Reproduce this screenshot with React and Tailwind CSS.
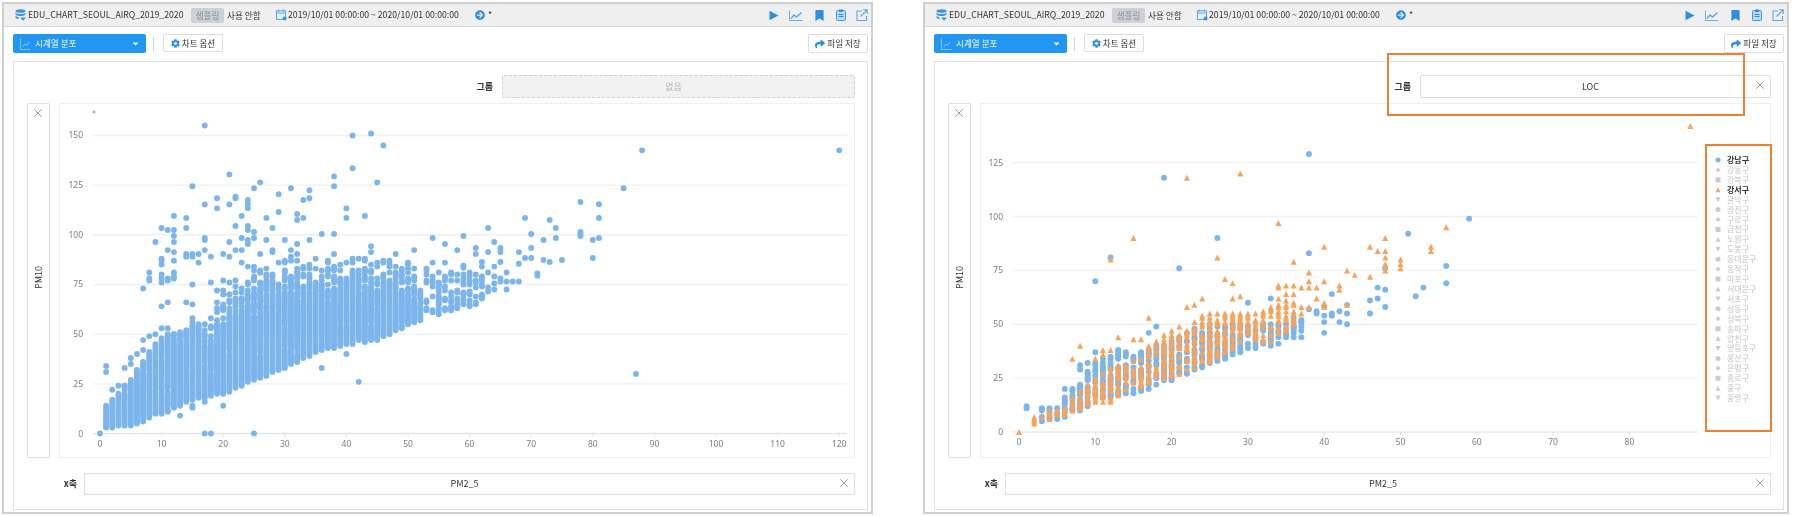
import { X } from "lucide-react";
import { FaCog, FaShare, FaArrowCircleRight, FaCaretDown, FaBookmark } from "react-icons/fa";

const BLUE = "#7cb5ec";
const ORANGE = "#f7a35c";
const GREY = "#cccccc";

const DISTRICTS = [
  "강남구", "강동구", "강북구", "강서구", "관악구", "광진구", "구로구", "금천구", "노원구",
  "도봉구", "동대문구", "동작구", "마포구", "서대문구", "서초구", "성동구", "성북구", "송파구",
  "양천구", "영등포구", "용산구", "은평구", "종로구", "중구", "중랑구",
];
const LEGEND_SHAPES = ["circle", "diamond", "square", "triangle", "down"];

// fixed seed so the scatter is the same on every render
function makeRandom(seed) {
  let s = seed;
  return () => {
    s = (s * 1664525 + 1013904223) % 4294967296;
    return s / 4294967296;
  };
}

function interp(table, x) {
  if (x <= table[0][0]) return table[0][1];
  for (let i = 1; i < table.length; i++) {
    const [x1, y1] = table[i];
    const [x0, y0] = table[i - 1];
    if (x <= x1) return y0 + ((y1 - y0) * (x - x0)) / (x1 - x0);
  }
  return table[table.length - 1][1];
}

function band(rand, from, to, lo, hi, density) {
  const pts = [];
  for (let x = from; x <= to; x++) {
    const a = Math.round(interp(lo, x));
    const b = Math.round(interp(hi, x));
    for (let y = a; y <= b; y++) {
      if (rand() < density(x, y, a, b)) pts.push([x, y]);
    }
  }
  return pts;
}

const LEFT_OUTLIERS = [
  [17,155],[41,150],[44,151],[46,145],[41,133.5],[21,130.4],[38,129.4],[26,126.4],[45,126.4],[15,124.4],[25,123.4],[31,123.4],[38,124.4],
  [34,122.4],[29,120.4],[19,118.4],[22,119.2],[22,118.4],[34,118.4],[24,117.5],[24,115.5],[24,113.4],[33,117.5],[17,115.3],[21,115.3],
  [19,113.3],[40,113.3],[29,111.5],[32,110.5],[12,109.5],[23,109.5],[43,109.5],[14,108.5],[27,108.5],[33,108.5],[40,108.5],[32,107.5],
  [10,103.4],[14,103.4],[22,104.4],[24,104.4],[28,103.4],[11,102.4],[12,102.4],[24,102.4],[25,101.4],[36,100.4],[38,100.4],[12,99.4],
  [17,98.4],[17,97.4],[23,98.4],[25,98.4],[27,97.4],[30,97.4],[34,97.4],[24,97.4],[54,98.4],[9,96.4],[12,96.4],[21,96.4],[24,95.4],
  [32,95.4],[56,95.4],[44,94.3],[11,92.3],[17,92.3],[22,92.3],[23,92.3],[28,92.3],[31,92.3],[51,92.3],[12,91.3],[28,91.3],[44,91.3],
  [14,90.3],[15,90.3],[16,90.3],[20,90.3],[26,90.3],[32,90.3],[38,90.3],[48,90.3],[14,89],[15,89],[18,89],[21,89],[31,89],[10,88],
  [41,88],[42,88],[12,87],[10,87],[32,87],[16,86],[23,86],[30,86],[40,86],[46,86],[50,86],[54,86],[56,86],[10,85],[24,84],[38,84],
  [47,84],[48,84],[27,83],[32,83],[33,83],[38,83],[8,81],[12,81],[26,81],[32,81],[8,78],[8,77],[10,80],[10,78],[10,76],[11,78],[11,77],
  [12,79],[12,78],[15,75],[7,73],[18,76],[20,77],[20,72],[19,72],[21,76],[21,70],[22,74],[23,68],[24,75],[27,80],[27,74],
  // right of the band
  [88,142.5],[120,142.5],[85,123.4],[78,116.5],[81,115.4],[81,108.5],[69,108.5],[73,107.5],[74,103.4],[63,103.4],[59,99.4],[70,100.4],
  [78,101.4],[78,100.4],[78,99.4],[74,98.4],[81,98.4],[72,97.4],[80,97.4],[64,96.4],[61,93.4],[65,93.4],[70,93.4],[58,92.3],[61,90.3],
  [63,91.3],[65,91.3],[68,91.3],[69,88.3],[70,88.3],[72,87.3],[73,86.3],[75,87.3],[80,88.3],[62,86.3],[65,86.3],[68,85.4],[59,84.4],
  [59,83.4],[62,84],[64,84],[63,81],[66,81],[71,80.6],[71,79.4],[60,81],[61,80],[62,79],[64,79],[65,78],[65,76.5],[66,76.5],[67,76.5],
  [68,76.5],[64,75.5],[61,73.5],[63,73.5],[66,72.5],[64,72.5],[63,71.5],[62,69.5],[59,70.4],[60,71.5],
  // below the band
  [87,30],[42,26],[36,33],[40,40],[13,9],[15,14],[15,13],[17,16],[20,14],[0,0],[17,0],[18,0],[25,0],[1,34],[1,31],[2,22],[3,24],[4,33],[4,24],
  [5,38],[5,35],[6,40],[7,47],[7,42],[8,49],[9,50],[10,53],[11,53],[11,50],[12,50],[13,50],[15,58],[15,56],[15,54],[10,64],[11,66],[14,66],[15,65],
];

const LEFT_BAND = band(
  makeRandom(11),
  1,
  62,
  [[1,3],[5,4],[10,10],[15,17],[20,20],[25,27],[30,33],[35,41],[40,45],[45,47],[50,55],[55,60],[62,66]],
  [[1,14],[3,20],[5,27],[7,36],[8,41],[10,48],[15,53],[16,55],[20,72],[25,84],[30,88],[35,88],[45,88],[55,82],[62,78]],
  (x, y, a, b) => {
    if (x > 52) return 0.42;
    // the top of each column thins out gradually
    const depth = (b - y) / 18;
    if (x > 16 && depth < 1) return 0.12 + depth * 0.78;
    return 0.985;
  }
);
const LEFT_POINTS = [...LEFT_BAND, ...LEFT_OUTLIERS];

const RIGHT_BLUE = [
  ...band(
    makeRandom(5),
    3,
    37,
    [[3,5],[5,6],[8,10],[10,14],[13,17],[15,18],[20,24],[25,32],[30,37],[35,42],[37,44]],
    [[3,11],[5,12],[8,23],[10,32],[13,38],[15,35],[20,44],[25,50],[30,50],[35,50],[37,52]],
    () => 0.62
  ),
  [1,12],[1,11],[6,20],[7,20],[8,31],[8,29],[9,32],[10,37],[13,38],[19,118],[38,129],[26,90],[12,81],[21,76],[10,70],[38,83],[30,60],[33,62],[17,46],[18,49],
  [59,99],[51,92],[56,77],[56,69],[53,67],[52,63],[47,67],[48,66],[47,62],[46,61],[48,58],[46,55],[41,64],[43,59],[43,55],[43,50],[42,56],[42,51],[41,55],
  [41,54],[40,54],[40,58],[40,51],[40,46],[39,56],[39,55],[38,57],[48,76],[36,53],[36,49],[36,47],[37,52],[37,51],
];
const RIGHT_ORANGE = [
  ...band(
    makeRandom(23),
    2,
    36,
    [[2,4],[3,5],[5,7],[8,11],[10,14],[12,14],[15,20],[18,24],[20,26],[23,30],[25,33],[27,35],[30,43],[33,42],[36,50]],
    [[2,7],[3,8],[5,11],[8,19],[10,26],[12,30],[15,33],[18,43],[20,47],[23,52],[25,55],[27,55],[30,55],[33,58],[36,60]],
    () => 0.62
  ),
  [56,95],[48,90],[46,86],[40,86],[47,84],[48,84],[54,86],[54,84],[50,80],[50,78],[50,76],[48,81],[48,78],[48,77],[48,75],[43,75],[44,73],[46,72],[40,70],
  [38,74],[38,70],[38,67],[39,67],[37,67],[42,68],[42,66],[39,62],[40,60],[40,58],[43,59],[38,58],[37,58],[37,55],[34,97],[15,90],[26,81],[12,80],[22,118],
  [29,120],[36,79],[27,71],[28,69],[0,0],[17,53],[34,68],[35,68],[36,68],[34,67],[35,64],[36,64],[35,61],[34,62],[24,62],[29,63],[28,62],[23,59],[22,58],
  [8,40],[7,34],[13,44],[15,43],[16,43],[11,38],[11,36],[12,38],[10,34],[88,142],
];

function Marker({ shape, x, y, r, color }) {
  if (shape === "circle") return <circle cx={x} cy={y} r={r} fill={color} />;
  if (shape === "square") return <rect x={x - r} y={y - r} width={r * 2} height={r * 2} fill={color} />;
  if (shape === "diamond")
    return <polygon points={`${x},${y - r} ${x + r},${y} ${x},${y + r} ${x - r},${y}`} fill={color} />;
  if (shape === "down")
    return <polygon points={`${x - r},${y - r} ${x + r},${y - r} ${x},${y + r}`} fill={color} />;
  return <polygon points={`${x},${y - r} ${x + r},${y + r} ${x - r},${y + r}`} fill={color} />;
}

function range(max, step) {
  const out = [];
  for (let v = 0; v <= max; v += step) out.push(v);
  return out;
}

function Chart({ ox, oy, ux, uy, gridFrom, gridTo, yMax, xMax, labelY, children }) {
  const tickFont = { fontFamily: "'Noto Sans', sans-serif", fontSize: 8.5, fill: "#7d7d7d" };
  return (
    <svg className="block h-full w-full">
      {range(yMax, 25).map((v) => (
        <g key={v}>
          {v > 0 && <line x1={gridFrom} x2={gridTo} y1={oy - v * uy} y2={oy - v * uy} stroke="#eff0f4" strokeWidth="1.4" />}
          <text x={gridFrom - 10} y={oy - v * uy + 3} textAnchor="end" style={tickFont}>
            {v}
          </text>
        </g>
      ))}
      <line x1={gridFrom} x2={gridTo} y1={oy} y2={oy} stroke="#d7deee" />
      {range(xMax, 10).map((v) => (
        <g key={v}>
          <line x1={ox + v * ux} x2={ox + v * ux} y1={oy} y2={oy + 3} stroke="#d7deee" />
          <text x={ox + v * ux} y={labelY} textAnchor="middle" style={tickFont}>
            {v}
          </text>
        </g>
      ))}
      {children}
    </svg>
  );
}

function LeftChart() {
  const ox = 40;
  const oy = 329.5;
  const ux = 6.16;
  const uy = 1.987;
  return (
    <Chart ox={ox} oy={oy} ux={ux} uy={uy} gridFrom={33} gridTo={787} yMax={150} xMax={120} labelY={343}>
      <circle cx={34} cy={8} r={1.4} fill={BLUE} />
      {LEFT_POINTS.map(([x, y], i) => (
        <circle key={i} cx={ox + x * ux} cy={oy - y * uy} r={2.95} fill={BLUE} />
      ))}
    </Chart>
  );
}

function RightChart() {
  const ox = 38;
  const oy = 328;
  const ux = 7.63;
  const uy = 2.155;
  return (
    <Chart ox={ox} oy={oy} ux={ux} uy={uy} gridFrom={32} gridTo={717} yMax={125} xMax={80} labelY={341}>
      {RIGHT_BLUE.map(([x, y], i) => (
        <circle key={i} cx={ox + x * ux} cy={oy - y * uy} r={2.95} fill={BLUE} />
      ))}
      {RIGHT_ORANGE.map(([x, y], i) => (
        <Marker key={i} shape="triangle" x={ox + x * ux} y={oy - y * uy} r={3} color={ORANGE} />
      ))}
      {DISTRICTS.map((name, i) => {
        const active = i === 0 || i === 3;
        const y = 56 + i * 9.92;
        const color = i === 0 ? BLUE : i === 3 ? ORANGE : GREY;
        return (
          <g key={name}>
            <Marker shape={LEGEND_SHAPES[i % 5]} x={737} y={y} r={2.5} color={color} />
            <text
              x={746}
              y={y + 3}
              style={{
                fontFamily: "'Noto Sans CJK KR', sans-serif",
                fontSize: 8,
                fontWeight: active ? 700 : 400,
                fill: active ? "#333333" : "#c4c4c4",
              }}
            >
              {name}
            </text>
          </g>
        );
      })}
    </Chart>
  );
}

function DbIcon() {
  return (
    <svg width="11" height="12" viewBox="0 0 11 12" className="shrink-0">
      <ellipse cx="5.5" cy="2" rx="5" ry="1.8" fill="#3a95e4" />
      <path d="M.5 3.5c1 1 3 1.6 5 1.6s4-.6 5-1.6v2c-1 1-3 1.5-5 1.5s-4-.5-5-1.5z" fill="#3a95e4" />
      <path d="M.5 7c1 .8 2 1.1 3 1.3v2C2.500 10 1 9.500.5 8.800z" fill="#3a95e4" />
      <path d="M5 8.500h6l-3 3.300z" fill="#3a95e4" />
    </svg>
  );
}

function CalendarIcon() {
  return (
    <svg width="11" height="12" viewBox="0 0 11 12" fill="none" stroke="#4d9fe2" className="shrink-0">
      <rect x=".5" y="1.800" width="9" height="8.700" strokeWidth=".9" fill="#e3f0fb" />
      <path d="M2.500.5v2M7.500.5v2M.5 4h9" strokeWidth=".9" />
      <circle cx="8.600" cy="9.600" r="2" fill="#3a95e4" stroke="none" />
    </svg>
  );
}

function HeaderIcons() {
  return (
    <div className="ml-auto flex items-center gap-[10px] pr-[3px]">
      <svg width="10" height="11" viewBox="0 0 10 11">
        <path d="M.5.800 9.500 5.500.5 10.200z" fill="#2f8fdf" />
      </svg>
      <svg width="14" height="11" viewBox="0 0 14 11" fill="none" stroke="#5aa9e6">
        <path d="M.5.500v10h13" strokeWidth=".9" />
        <path d="M2 8.500 5 5l2.500 2L12.500 2.500" strokeWidth="1.500" />
      </svg>
      <FaBookmark className="ml-[1px] size-[11px] text-[#2f8fdf]" />
      <svg width="10" height="12" viewBox="0 0 10 12" className="ml-[1px]">
        <rect x=".5" y="1.500" width="9" height="10" rx="1" fill="#bcdcf5" stroke="#3f97e0" />
        <rect x="3" y=".5" width="4" height="2.500" fill="#2f8fdf" />
        <path d="M2.500 5.500h5M2.500 7.500h5" stroke="#2f8fdf" />
      </svg>
      <svg width="12" height="12" viewBox="0 0 12 12" fill="none" stroke="#58a8e6" strokeWidth="1.100">
        <path d="M6 2H1v9.500h9.500V7" />
        <path d="M4.500 7.500 11 1M7 .8h4.200V5" />
      </svg>
    </div>
  );
}

function Header() {
  return (
    <div className="flex h-[23px] shrink-0 items-center border-b border-[#d6d6d6] bg-[#efefef] pl-[11px] text-[8.6px] text-[#333]">
      <DbIcon />
      <span className="ml-[2px] w-[163px] whitespace-nowrap text-[8.7px]">EDU_CHART_SEOUL_AIRQ_2019_2020</span>
      <span className="flex h-[15px] w-[33px] items-center justify-center rounded-[2px] bg-[#cdd1d5] text-[#8a8f95]">샘플링</span>
      <span className="ml-[3px] w-[49px] whitespace-nowrap">사용 안함</span>
      <CalendarIcon />
      <span className="ml-[1px] w-[187px] whitespace-nowrap text-[8.7px]">2019/10/01 00:00:00 ~ 2020/10/01 00:00:00</span>
      <FaArrowCircleRight className="size-[10px] text-[#2f8fdf]" />
      <span className="ml-[3px] text-[9px]">*</span>
      <HeaderIcons />
    </div>
  );
}

function Toolbar() {
  return (
    <div className="flex h-[34px] shrink-0 items-start pl-[9px] pr-[3px] pt-[7px] text-[8.6px] text-[#333]">
      <div className="flex h-[19px] w-[133px] items-center rounded-[2px] bg-[#2196f3] pl-[7px] pr-[6px] text-white">
        <svg width="11" height="12" viewBox="0 0 11 12" fill="none" stroke="#9fd0f7" strokeWidth=".8">
          <path d="M.5.500v11h10" />
          <path d="M2.500 9 5 6l1.500 1.500L9 4" />
        </svg>
        <span className="ml-[4px]">시계열 분포</span>
        <FaCaretDown className="ml-auto size-[9px]" />
      </div>
      <div className="ml-[7px] mt-[3px] h-[14px] w-px bg-[#d5d5d5]" />
      <button className="ml-[9px] flex h-[18px] w-[60px] items-center justify-center rounded-[2px] border border-[#dcdde3] bg-white">
        <FaCog className="size-[9px] text-[#2f8fdf]" />
        <span className="ml-[2px]">차트 옵션</span>
      </button>
      <button className="ml-auto flex h-[19px] w-[60px] items-center justify-center rounded-[2px] border border-[#dcdde3] bg-white">
        <FaShare className="size-[10px] text-[#2f8fdf]" />
        <span className="ml-[2px]">파일 저장</span>
      </button>
    </div>
  );
}

function ClearIcon({ className }) {
  return <X className={className} strokeWidth={1.5} size={14} color="#8791a5" />;
}

function FieldLabel({ children, className }) {
  return <span className={`text-[9px] font-bold text-[#333] ${className}`}>{children}</span>;
}

function Panel({ width, groupWidth, group, chart, overlay }) {
  return (
    <div className={`relative flex h-[512px] shrink-0 flex-col border-2 border-[#cfcfcf] bg-white ${width}`}>
      <Header />
      <Toolbar />
      <div className="ml-[9px] mr-[3px] flex h-[449px] flex-col border border-[#dfe0e8] pb-[14px] pl-[13px] pr-[12px] pt-[13px] font-['Noto_Sans_CJK_KR',sans-serif]">
        <div className="flex h-[23px] items-center justify-end gap-[9px]">
          <FieldLabel>그룹</FieldLabel>
          {group ? (
            <div className={`relative flex h-full items-center justify-center rounded-[2px] border border-[#dcdde3] pr-[10px] text-[9px] text-[#333] ${groupWidth}`}>
              {group}
              <ClearIcon className="absolute right-[3px] top-[2px]" />
            </div>
          ) : (
            <div className={`flex h-full items-center justify-center rounded-[2px] border border-dashed border-[#cfd0d6] bg-[#f2f2f2] pr-[10px] text-[9px] text-[#b5b5b5] ${groupWidth}`}>
              없음
            </div>
          )}
        </div>
        <div className="mt-[5px] flex h-[356px] gap-[9px]">
          <div className="relative flex w-[23px] shrink-0 items-center justify-center rounded-[2px] border border-[#dcdde3] pb-[6px]">
            <ClearIcon className="absolute left-[3px] top-[2px]" />
            <span className="rotate-180 text-[9px] text-[#333] [writing-mode:vertical-rl]">PM10</span>
          </div>
          <div className="min-w-0 flex-1 border border-[#eff0f4]">{chart}</div>
        </div>
        <div className="mt-[15px] flex h-[22px] items-center">
          <FieldLabel className="w-[50px] text-right">x축</FieldLabel>
          <div className="relative ml-[7px] flex h-full flex-1 items-center justify-center rounded-[2px] border border-[#dcdde3] pr-[10px] text-[9px] text-[#333]">
            PM2_5
            <ClearIcon className="absolute right-[3px] top-[2px]" />
          </div>
        </div>
      </div>
      {overlay}
    </div>
  );
}

export default function App() {
  return (
    <div className="flex h-[516px] w-[1795px] gap-[50px] overflow-hidden bg-white pl-[2px] pt-[2px] font-['Noto_Sans_CJK_KR',sans-serif] blur-[0.35px]">
      <Panel width="w-[871px]" groupWidth="w-[353px]" chart={<LeftChart />} />
      <Panel
        width="w-[866px]"
        groupWidth="w-[351px]"
        group="LOC"
        chart={<RightChart />}
        overlay={
          <>
            <div className="absolute left-[462px] top-[49px] h-[63px] w-[358px] border-2 border-[#ef7f35]" />
            <div className="absolute left-[780px] top-[140px] h-[288px] w-[67px] border-2 border-[#ef7f35]" />
          </>
        }
      />
    </div>
  );
}
